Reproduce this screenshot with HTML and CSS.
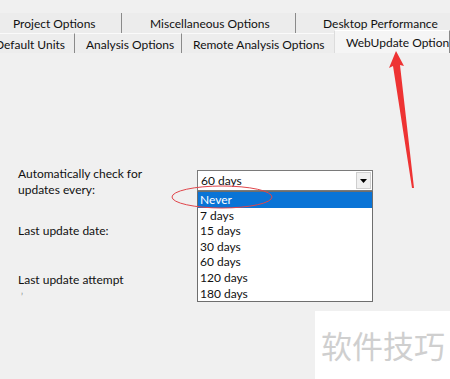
FILE: index.html
```html
<!DOCTYPE html>
<html lang="en">

<head>
    <meta charset="UTF-8">
    <title>WebUpdate Options</title>
    <link rel="stylesheet" href="styles.css">
</head>

<body>
    <div class="dialog">
        <div class="tab-row back">
            <div class="tab t-project">Project Options</div>
            <div class="tab t-misc">Miscellaneous Options</div>
            <div class="tab t-desktop">Desktop Performance</div>
        </div>
        <div class="tab-row front">
            <div class="tab t-units">Default Units</div>
            <div class="tab t-analysis">Analysis Options</div>
            <div class="tab t-remote">Remote Analysis Options</div>
            <div class="tab active t-web">WebUpdate Options</div>
        </div>

        <div class="panel">
            <div class="row first">
                <div class="label">Automatically check for<br>updates every:</div>
                <div class="combo">
                    <div class="combo-box">
                        <span>60 days</span>
                        <span class="combo-btn">
                            <svg width="7" height="4" viewBox="0 0 7 4"><path d="M0 0H7L3.5 4Z" fill="#000"/></svg>
                        </span>
                    </div>
                    <ul class="combo-list">
                        <li class="selected">Never</li>
                        <li>7 days</li>
                        <li>15 days</li>
                        <li>30 days</li>
                        <li>60 days</li>
                        <li>120 days</li>
                        <li>180 days</li>
                    </ul>
                </div>
            </div>
            <div class="row second">
                <div class="label">Last update date:</div>
            </div>
            <div class="row">
                <div class="label">Last update attempt<br><span class="cut">&#8217;</span></div>
            </div>
        </div>

        <svg class="marks" width="450" height="379" viewBox="0 0 450 379">
            <ellipse cx="222" cy="197" rx="50" ry="11" fill="none" stroke="#e0454a" stroke-width="1"/>
            <path d="M396 51 L404 66 L400 65 L414 188 L412 188 L393 66 L389 68 Z" fill="#ee3333"/>
        </svg>

        <div class="watermark">软件技巧</div>
    </div>
</body>

</html>
```

FILE: styles.css
```css
body {
    margin: 0;
    padding: 0;
    font-family: Lato, "Liberation Sans", Arial, sans-serif;
    font-size: 12px;
    color: #111;
    background-color: #f0f0f0;
}

.dialog {
    position: relative;
    width: 450px;
    height: 379px;
    overflow: hidden;
    background-color: #f0f0f0;
}

.tab-row {
    display: flex;
    height: 20px;
}

.tab-row.back {
    margin-top: 13px;
}

.tab {
    box-sizing: border-box;
    flex-shrink: 0;
    height: 20px;
    padding-top: 2px;
    line-height: 17px;
    white-space: nowrap;
    border-right: 1px solid #8a8a8a;
}

.tab-row.back .tab {
    background-color: #ececec;
}

.t-project { width: 122px; padding-left: 13px; }
.t-misc { width: 174px; padding-left: 28px; }
.t-desktop { width: 154px; padding-left: 27px; border-right: none; }

.tab-row.front .tab {
    border-top: 1px solid #fafafa;
    background-color: #ededed;
}

.t-units { width: 75px; text-indent: -5px; }
.t-analysis { width: 107px; padding-left: 11px; }
.t-remote { width: 152px; padding-left: 11px; border-right: none; }

.tab-row.front .tab.active {
    flex: 1 1 0;
    min-width: 0;
    overflow: hidden;
    margin-top: -3px;
    height: 23px;
    padding-top: 3px;
    padding-left: 11px;
    background-color: #f5f5f5;
    border-left: 1px solid #dcdcdc;
    border-top: 1px solid #ffffff;
}

.panel {
    padding: 113px 0 0 18px;
}

.row {
    display: flex;
    align-items: flex-start;
}

.row.first {
    height: 57px;
}

.row.second {
    height: 49px;
}

.label {
    width: 179px;
    line-height: 16px;
}

.cut {
    display: inline-block;
    font-size: 9px;
    line-height: 8px;
    margin-left: 3px;
    color: #888;
}

.combo {
    position: relative;
    width: 176px;
    margin-top: 4px;
}

.combo-box {
    box-sizing: border-box;
    display: flex;
    align-items: center;
    justify-content: space-between;
    height: 21px;
    padding-left: 3px;
    background-color: #fff;
    border: 1px solid #7a7a7a;
}

.combo-btn {
    display: flex;
    align-items: center;
    justify-content: center;
    width: 15px;
    height: 17px;
    margin-right: 1px;
    background-color: #f0f0f0;
    border: 1px solid #cfcfcf;
    box-sizing: border-box;
}

.combo-list {
    position: absolute;
    top: 21px;
    left: 0;
    box-sizing: border-box;
    width: 176px;
    margin: 0;
    padding: 0;
    list-style: none;
    background-color: #fff;
    border: 1px solid #6e6e6e;
}

.combo-list li {
    height: 15.6px;
    line-height: 15.6px;
    padding-left: 2px;
}

.combo-list li.selected {
    background-color: #0a74d6;
    color: #fff;
}

.marks {
    position: absolute;
    top: 0;
    left: 0;
    pointer-events: none;
}

.watermark {
    position: absolute;
    left: 315px;
    top: 311px;
    width: 135px;
    height: 68px;
    background-color: #fff;
    color: #cfcfcf;
    font-family: "Noto Sans CJK SC", sans-serif;
    font-size: 31px;
    line-height: 68px;
    padding-left: 6px;
    box-sizing: border-box;
}
```
